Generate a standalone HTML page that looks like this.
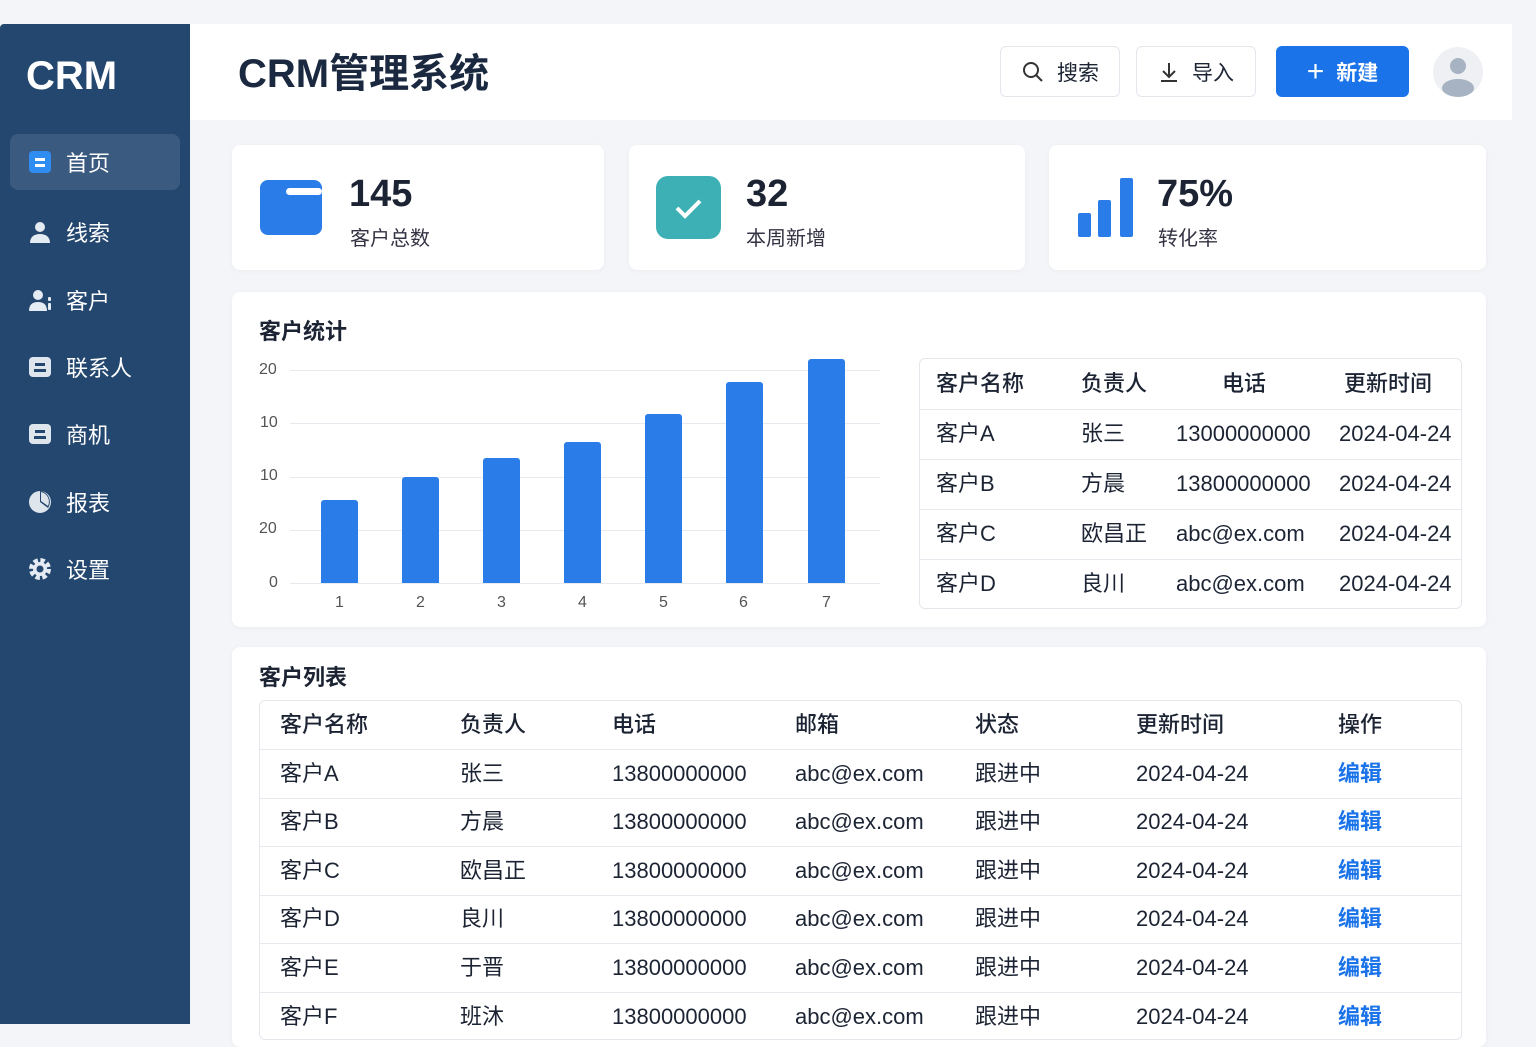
<!DOCTYPE html>
<html><head><meta charset="utf-8"><style>
*{margin:0;padding:0;box-sizing:border-box}
body{width:1536px;height:1024px;overflow:hidden;background:#f3f5f8;font-family:"Liberation Sans","Noto Sans CJK SC",sans-serif;color:#1c2434;position:relative}
.abs{position:absolute}
#side{left:0;top:24px;width:190px;height:1000px;background:#24476f;border-radius:4px 0 0 0}
.logo{left:26px;top:54px;font-size:40px;font-weight:bold;color:#fff}
.nav{left:10px;width:170px;height:56px;color:#fff;font-size:22px;display:flex;align-items:center;padding-left:18px}
.nav .ic{width:24px;height:24px;margin-right:14px;display:flex;align-items:center;justify-content:center}
.active{background:#3a5a80;border-radius:8px}
#head{left:190px;top:24px;width:1322px;height:96px;background:#fff}
.btn{top:46px;height:51px;border:1px solid #e3e7ec;border-radius:6px;background:#fff;font-size:21px;display:flex;align-items:center;justify-content:center;gap:12px}
.card{background:#fff;border-radius:8px;box-shadow:0 1px 6px rgba(0,0,0,.04)}
.num{font-size:38px;font-weight:bold;color:#1c2434}
.lbl{font-size:20px;color:#334}
.ax{font-size:16px;color:#555;}
.grid{left:290px;width:590px;height:1px;background:#e6e9ee}
.bar{width:37px;background:#2a7de8;border-radius:3px 3px 0 0}
table{border-collapse:collapse;font-size:22px}
td{height:50px;border-top:1px solid #e6e9ee;white-space:nowrap;line-height:1;padding:0}
.hd td{font-weight:500;color:#1c2434}
.edit{color:#1a73e8;font-weight:bold}
.lt td{height:48.5px}
</style></head><body>
<div id="side" class="abs"></div>
<div class="abs logo">CRM</div>
<div class="abs nav active" style="top:134px"><span class="ic"><svg width="24" height="24"><rect x="1" y="1" width="22" height="22" rx="4" fill="#2f8cf0"/><rect x="7" y="8" width="10" height="3" fill="#fff"/><rect x="7" y="14" width="10" height="3" fill="#fff"/></svg></span>首页</div>
<div class="abs nav" style="top:204px"><span class="ic"><svg width="24" height="24" fill="#e5ebf2"><circle cx="12" cy="7" r="5"/><path d="M2 23c0-6 4-9 10-9s10 3 10 9z"/></svg></span>线索</div>
<div class="abs nav" style="top:272px"><span class="ic"><svg width="24" height="24" fill="#e5ebf2"><circle cx="10" cy="7" r="5"/><path d="M1 23c0-6 3-9 9-9s9 3 9 9z"/><rect x="20" y="9" width="3" height="4" rx="1"/><rect x="20" y="15" width="3" height="7" rx="1"/></svg></span>客户</div>
<div class="abs nav" style="top:339px"><span class="ic"><svg width="24" height="24"><rect x="1" y="2" width="22" height="20" rx="4" fill="#dfe5ec"/><rect x="7" y="8" width="10" height="3" fill="#24476f"/><rect x="6" y="14" width="12" height="3" fill="#24476f"/></svg></span>联系人</div>
<div class="abs nav" style="top:406px"><span class="ic"><svg width="24" height="24"><rect x="1" y="2" width="22" height="20" rx="4" fill="#dfe5ec"/><rect x="7" y="8" width="10" height="3" fill="#24476f"/><rect x="6" y="14" width="12" height="3" fill="#24476f"/></svg></span>商机</div>
<div class="abs nav" style="top:474px"><span class="ic"><svg width="24" height="24"><circle cx="12" cy="12" r="11" fill="#dfe5ec"/><path d="M12 1v11l8 6A11 11 0 0 0 12 1z" fill="#24476f"/><path d="M13 2v9l7 5A10 10 0 0 0 13 2z" fill="#dfe5ec"/></svg></span>报表</div>
<div class="abs nav" style="top:541px"><span class="ic"><svg width="24" height="24"><circle cx="12" cy="12" r="8" fill="none" stroke="#e5ebf2" stroke-width="6" stroke-dasharray="4 2.3"/><circle cx="12" cy="12" r="7" fill="#e5ebf2"/><circle cx="12" cy="12" r="3.5" fill="#24476f"/></svg></span>设置</div>

<div id="head" class="abs"></div>
<div class="abs" style="left:238px;top:54px;font-size:40px;line-height:40px;font-weight:bold;color:#1a2840">CRM管理系统</div>
<div class="abs btn" style="left:1000px;width:120px"><svg width="24" height="24" fill="none" stroke="#333" stroke-width="2"><circle cx="10" cy="10" r="7"/><path d="M15 15l6 6"/></svg>搜索</div>
<div class="abs btn" style="left:1136px;width:120px"><svg width="22" height="22" fill="none" stroke="#333" stroke-width="2"><path d="M11 2v13M5 10l6 6 6-6M3 20h16"/></svg>导入</div>
<div class="abs btn" style="left:1276px;width:133px;background:#1a73e8;border-color:#1a73e8;color:#fff;font-weight:bold"><span style="font-size:30px;font-weight:normal">+</span>新建</div>
<div class="abs" style="left:1433px;top:47px;width:50px;height:50px;border-radius:50%;background:#eef0f3;overflow:hidden"><svg width="50" height="50" fill="#a7b3c2"><circle cx="25" cy="19" r="8"/><ellipse cx="25" cy="41" rx="16" ry="9"/></svg></div>

<div class="abs card" style="left:232px;top:145px;width:372px;height:125px"></div>
<div class="abs" style="left:260px;top:180px;width:62px;height:55px;background:#2a7de8;border-radius:8px"><div style="position:absolute;left:26px;top:8px;width:36px;height:7px;background:#fff;border-radius:4px"></div></div>
<div class="abs num" style="left:349px;top:173px">145</div>
<div class="abs lbl" style="left:350px;top:222px">客户总数</div>

<div class="abs card" style="left:629px;top:145px;width:396px;height:125px"></div>
<div class="abs" style="left:656px;top:176px;width:65px;height:63px;background:#3cb0b4;border-radius:12px"><svg width="65" height="63" fill="none" stroke="#fff" stroke-width="4"><path d="M21 32l8 8 15-15"/></svg></div>
<div class="abs num" style="left:746px;top:173px">32</div>
<div class="abs lbl" style="left:746px;top:222px">本周新增</div>

<div class="abs card" style="left:1049px;top:145px;width:437px;height:125px"></div>
<div class="abs" style="left:1078px;top:178px"><svg width="56" height="60" fill="#2a7de8"><rect x="0" y="35" width="13" height="24" rx="2"/><rect x="20" y="22" width="13" height="37" rx="2"/><rect x="42" y="0" width="13" height="59" rx="2"/></svg></div>
<div class="abs num" style="left:1157px;top:173px">75%</div>
<div class="abs lbl" style="left:1158px;top:222px">转化率</div>

<div class="abs card" style="left:232px;top:292px;width:1254px;height:335px"></div>
<div class="abs" style="left:259px;top:314px;font-size:22px;font-weight:bold">客户统计</div>
<div class="abs grid" style="top:370px"></div><div class="abs grid" style="top:423px"></div><div class="abs grid" style="top:477px"></div><div class="abs grid" style="top:530px"></div><div class="abs grid" style="top:583px"></div>
<div class="abs ax" style="left:259px;top:361px">20</div><div class="abs ax" style="left:260px;top:414px">10</div><div class="abs ax" style="left:260px;top:467px">10</div><div class="abs ax" style="left:259px;top:520px">20</div><div class="abs ax" style="left:269px;top:574px">0</div>
<div class="abs bar" style="left:321px;top:500px;height:83px"></div>
<div class="abs bar" style="left:402px;top:477px;height:106px"></div>
<div class="abs bar" style="left:483px;top:458px;height:125px"></div>
<div class="abs bar" style="left:564px;top:442px;height:141px"></div>
<div class="abs bar" style="left:645px;top:414px;height:169px"></div>
<div class="abs bar" style="left:726px;top:382px;height:201px"></div>
<div class="abs bar" style="left:808px;top:359px;height:224px"></div>
<div class="abs ax" style="left:335px;top:594px">1</div><div class="abs ax" style="left:416px;top:594px">2</div><div class="abs ax" style="left:497px;top:594px">3</div><div class="abs ax" style="left:578px;top:594px">4</div><div class="abs ax" style="left:659px;top:594px">5</div><div class="abs ax" style="left:739px;top:594px">6</div><div class="abs ax" style="left:822px;top:594px">7</div>

<div class="abs" style="left:919px;top:358px;width:543px;height:251px;border:1px solid #e3e7ec;border-radius:6px;overflow:hidden;background:#fff">
<table style="width:100%;table-layout:fixed">
<colgroup><col style="width:161px"><col style="width:95px"><col style="width:163px"><col></colgroup>
<tr class="hd"><td style="border:0;padding-left:16px">客户名称</td><td style="border:0">负责人</td><td style="border:0;padding-left:46px">电话</td><td style="border:0;padding-left:5px">更新时间</td></tr>
<tr><td style="padding-left:16px">客户A</td><td>张三</td><td>13000000000</td><td>2024-04-24</td></tr>
<tr><td style="padding-left:16px">客户B</td><td>方晨</td><td>13800000000</td><td>2024-04-24</td></tr>
<tr><td style="padding-left:16px">客户C</td><td>欧昌正</td><td>abc@ex.com</td><td>2024-04-24</td></tr>
<tr><td style="padding-left:16px">客户D</td><td>良川</td><td>abc@ex.com</td><td>2024-04-24</td></tr>
</table></div>

<div class="abs card" style="left:232px;top:647px;width:1254px;height:400px"></div>
<div class="abs" style="left:259px;top:660px;font-size:22px;font-weight:bold">客户列表</div>
<div class="abs" style="left:259px;top:700px;width:1203px;height:340px;border:1px solid #e3e7ec;border-radius:6px;overflow:hidden;background:#fff">
<table class="lt" style="width:100%;table-layout:fixed">
<colgroup><col style="width:200px"><col style="width:152px"><col style="width:183px"><col style="width:180px"><col style="width:161px"><col style="width:202px"><col></colgroup>
<tr class="hd"><td style="border:0;height:47px;padding-left:20px">客户名称</td><td style="border:0">负责人</td><td style="border:0">电话</td><td style="border:0">邮箱</td><td style="border:0">状态</td><td style="border:0">更新时间</td><td style="border:0">操作</td></tr>
<tr><td style="padding-left:20px">客户A</td><td>张三</td><td>13800000000</td><td>abc@ex.com</td><td>跟进中</td><td>2024-04-24</td><td class="edit">编辑</td></tr>
<tr><td style="padding-left:20px">客户B</td><td>方晨</td><td>13800000000</td><td>abc@ex.com</td><td>跟进中</td><td>2024-04-24</td><td class="edit">编辑</td></tr>
<tr><td style="padding-left:20px">客户C</td><td>欧昌正</td><td>13800000000</td><td>abc@ex.com</td><td>跟进中</td><td>2024-04-24</td><td class="edit">编辑</td></tr>
<tr><td style="padding-left:20px">客户D</td><td>良川</td><td>13800000000</td><td>abc@ex.com</td><td>跟进中</td><td>2024-04-24</td><td class="edit">编辑</td></tr>
<tr><td style="padding-left:20px">客户E</td><td>于晋</td><td>13800000000</td><td>abc@ex.com</td><td>跟进中</td><td>2024-04-24</td><td class="edit">编辑</td></tr>
<tr><td style="padding-left:20px">客户F</td><td>班沐</td><td>13800000000</td><td>abc@ex.com</td><td>跟进中</td><td>2024-04-24</td><td class="edit">编辑</td></tr>
</table></div>
</body></html>
